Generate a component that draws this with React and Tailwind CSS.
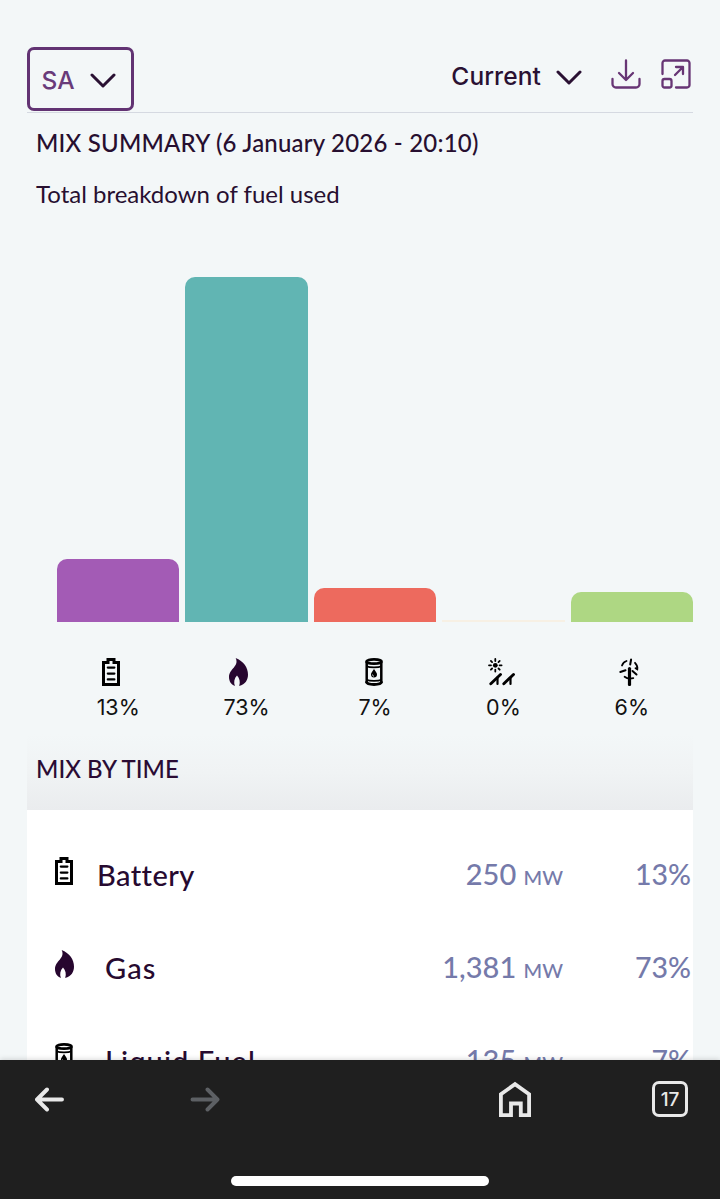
import React from 'react';

const BatteryIcon = ({ className = '' }) => (
  <svg width="18" height="28" viewBox="0 0 18 28" fill="none" stroke="#000" className={className}>
    <path d="M1.500 26.500V4.500H6V1.500h6v3h4.500v22z" strokeWidth="3" />
    <path d="M5.800 9.600h6.600M5.800 15.600h6.600M5.800 21.400h6.600" strokeWidth="2.200" strokeLinecap="round" />
  </svg>
);

const GasIcon = ({ className = '' }) => (
  <svg width="19" height="28" viewBox="0 0 19 28" fill="#27062f" className={className}>
    <path d="M6.600 0C14.500 3.200 19 9.500 19 16.600c0 5.400-2.600 9.900-8.800 11.400 1.300-4.200.4-7.600-2.200-10.500-2.800 3-3.500 6.700-2.100 10.400C1.900 26.600 0 22.800 0 19c0-4.300 2.400-6.800 4.900-9.600C7.300 6.700 8.500 3.700 6.600 0z" />
  </svg>
);

const FuelIcon = ({ className = '' }) => (
  <svg width="18" height="28" viewBox="0 0 18 28" fill="none" stroke="#000" className={className}>
    <ellipse cx="9" cy="3.500" rx="7.500" ry="2.100" strokeWidth="2.800" />
    <path d="M1.700 4v20.500M16.300 4v20.500" strokeWidth="2.500" />
    <path d="M1.500 8.200c3 1.500 12 1.500 15 0M1.500 21.800c3 1.500 12 1.500 15 0" strokeWidth="1.800" />
    <path d="M1.300 23.500c0 4 15.400 4 15.400 0" strokeWidth="2.800" />
    <path d="M9 11c1.800 2.600 3 3.900 3 5.600a3 3 0 0 1-6 0c0-1.700 1.200-3 3-5.600z" fill="#000" stroke="none" />
    <path d="M7.500 16.500c0 1 .5 1.600 1.400 1.800" stroke="#f3f7f8" strokeWidth=".8" />
  </svg>
);

const SolarIcon = ({ className = '' }) => (
  <svg width="28" height="28" viewBox="0 0 28 28" fill="none" stroke="#000" strokeLinecap="round" className={className}>
    <circle cx="7.300" cy="7.300" r="2.400" fill="#000" stroke="none" />
    <path d="M7.300 1v2M7.300 11.600v2M1 7.300h2M11.600 7.300h2M2.900 2.900l1.200 1.200M10.500 10.500l1.200 1.200M2.900 11.700l1.200-1.200M10.500 4.100l1.200-1.200" strokeWidth="1.800" />
    <path d="M2.800 25.800l9.700-9.300M15.800 25.800l9.700-9.300" strokeWidth="2.900" />
    <path d="M9.500 19.500v6.500M22.500 19.500v6.500" strokeWidth="2.200" />
  </svg>
);

const WindIcon = ({ className = '' }) => (
  <svg width="20" height="28" viewBox="0 0 20 28" fill="none" stroke="#000" strokeLinecap="round" className={className}>
    <path d="M10.500 10.500v16" strokeWidth="3.200" />
    <path d="M11.200 6.500l.9-5M6.500 12.300L1.300 14M13.500 13l4 3.500" strokeWidth="2" />
    <path d="M3 7.500C3.800 5.200 5.300 3.700 7.500 3M16 4.800c2 2 2.700 4.300 2.300 6.500l-1.800-1M5.600 18.800c2.600 2 6 2 8.700 1.300" strokeWidth="1.800" />
  </svg>
);

const Chevron = ({ className = '' }) => (
  <svg width="26" height="15" viewBox="0 0 26 15" fill="none" stroke="#2a1133" strokeWidth="3" strokeLinecap="round" strokeLinejoin="round" className={className}>
    <path d="M2 2l11 11L24 2" />
  </svg>
);

const fuels = [
  { label: '13%', height: 63, color: 'bg-[#a35bb5]', Icon: BatteryIcon, shift: 'mr-[15px]' },
  { label: '73%', height: 345, color: 'bg-[#61b5b3]', Icon: GasIcon, shift: 'mr-[16px]' },
  { label: '7%', height: 34, color: 'bg-[#ed6a5e]', Icon: FuelIcon, shift: 'mr-[3px]' },
  { label: '0%', height: 2, color: 'bg-[#f7f0e4]', Icon: SolarIcon, shift: 'mr-[3px]' },
  { label: '6%', height: 30, color: 'bg-[#aed783]', Icon: WindIcon, shift: 'mr-[5px]' },
];

const rows = [
  { name: 'Battery', mw: '250', share: '13%', Icon: BatteryIcon, indent: 'pl-6', tracking: 'tracking-[0.4px]' },
  { name: 'Gas', mw: '1,381', share: '73%', Icon: GasIcon, indent: 'pl-[31px]', tracking: 'tracking-[1.1px]' },
  { name: 'Liquid Fuel', mw: '135', share: '7%', Icon: FuelIcon, indent: 'pl-8', tracking: 'tracking-[1.1px]' },
];

const Header = () => (
  <header className="flex h-[66px] shrink-0 justify-between border-b-[1.5px] border-[#d5d9e1]">
    <button className="flex h-16 w-[107px] items-center gap-[15px] rounded-[7px] border-[3.5px] border-[#623373] pl-[11.5px]">
      <span className="mt-0.5 font-['Inter'] text-[24.5px] font-medium text-[#693b7a]">SA</span>
      <Chevron className="mt-[3px]" />
    </button>
    <div className="flex h-[58px] items-center">
      <span className="font-['Inter'] text-[24.5px] font-medium tracking-[0.1px] text-[#2a1133]">Current</span>
      <Chevron className="ml-[15px] mt-[3px]" />
      <svg width="30" height="30" viewBox="0 0 30 30" fill="none" stroke="#673574" strokeWidth="2.300" strokeLinecap="round" strokeLinejoin="round" className="ml-[29px] mt-[-5px]">
        <path d="M15 1.500v19M8 14l7 7 7-7M1.500 20v5a3.500 3.500 0 0 0 3.500 3.500h20a3.500 3.500 0 0 0 3.500-3.500v-5" />
      </svg>
      <svg width="30" height="30" viewBox="0 0 30 30" fill="none" stroke="#673574" strokeWidth="2.300" strokeLinecap="round" strokeLinejoin="round" className="ml-5 mr-[2px] mt-[-5px]">
        <path d="M1.500 15V4A2.500 2.500 0 0 1 4 1.500h22A2.500 2.500 0 0 1 28.500 4v22a2.500 2.500 0 0 1-2.500 2.500H15M14 16l8-8M15 8h7v7" />
        <rect x="1.500" y="20" width="9" height="8.500" rx="2" />
      </svg>
    </div>
  </header>
);

const MixChart = () => (
  <section>
    <div className="flex h-[388px] items-end gap-1.5 pl-[30px]">
      {fuels.map(({ label, height, color }) => (
        <div key={label} className={`flex-1 ${height > 9 ? 'rounded-t-[10px]' : ''} ${color}`} style={{ height }} />
      ))}
    </div>
    <div className="flex gap-1.5 pl-[30px] pt-9">
      {fuels.map(({ label, Icon, shift }) => (
        <div key={label} className="flex flex-1 flex-col items-center">
          <Icon className={shift} />
          <span className="mt-[5px] font-['Inter'] text-[21.5px] leading-8 text-[#111]">{label}</span>
        </div>
      ))}
    </div>
  </section>
);

const MixRow = ({ name, mw, share, Icon, indent, tracking }) => (
  <div className="flex h-[93px] items-center pl-7">
    <Icon className="mb-2 shrink-0" />
    <span className={`text-[29px] font-medium text-[#270a30] ${indent} ${tracking}`}>{name}</span>
    <span className="mb-px ml-auto text-[29px] font-medium text-[#757aaa]">
      {mw} <span className="text-[20px]">MW</span>
    </span>
    <span className="mb-px w-[130px] pr-0.5 text-right text-[28.5px] font-medium text-[#757aaa]">{share}</span>
  </div>
);

const BrowserBar = () => (
  <nav className="relative flex h-[139px] shrink-0 items-start bg-[#1f1f1f] pl-[35px] pr-8 pt-[21px] shadow-[0_-1px_5px_rgba(0,0,0,0.15)]">
    <svg width="30" height="36" viewBox="0 0 30 36" fill="none" stroke="#e8e8e8" strokeWidth="3.900" strokeLinecap="round" strokeLinejoin="round">
      <path d="M27 18.500H2.500M12 8.500l-10 10 10 10" />
    </svg>
    <svg width="30" height="36" viewBox="0 0 30 36" fill="none" stroke="#5d6064" strokeWidth="3.900" strokeLinecap="round" strokeLinejoin="round" className="ml-[125px]">
      <path d="M2.500 18.500h25M17.500 8.500l10 10-10 10" />
    </svg>
    <svg width="32" height="36" viewBox="0 0 32 36" fill="none" stroke="#e8e8e8" strokeWidth="3.800" className="ml-auto mr-[121px]">
      <path d="M1.900 34.100V13.200L16 3.200l14.100 10v20.900h-8.300V22.500H12v11.600z" />
    </svg>
    <span className="flex h-9 w-9 items-center justify-center rounded-[7px] border-[3.5px] border-[#e8e8e8] pt-0.5 font-['Inter'] text-[19px] font-medium tracking-[-0.2px] text-[#e8e8e8]">17</span>
    <div className="absolute bottom-[13px] left-[231px] h-2.5 w-[258px] rounded-full bg-white" />
  </nav>
);

export default function App() {
  return (
    <div className="flex h-[1199px] w-[720px] flex-col overflow-hidden bg-[#f3f7f8] font-['Lato',sans-serif]">
      <main className="flex min-h-0 flex-1 flex-col overflow-hidden px-[27px] pt-[47px]">
        <Header />
        <div className="h-[121px] shrink-0 pl-[9px] pt-[14px] text-[#270f30]">
          <h1 className="text-[24px] font-medium leading-8 tracking-[0.2px]">MIX SUMMARY (6 January 2026 - 20:10)</h1>
          <p className="mt-[19px] text-[24px] leading-8">Total breakdown of fuel used</p>
        </div>
        <MixChart />
        <h2 className="mt-[11px] h-[76px] shrink-0 bg-linear-to-b from-[#f3f7f8] via-[#f0f3f4] to-[#eaecee] pl-[9px] pt-[19px] text-[24px] font-medium leading-8 text-[#2b0c34]">MIX BY TIME</h2>
        <section className="shrink-0 bg-white pt-[18px]">
          {rows.map((row) => (
            <MixRow key={row.name} {...row} />
          ))}
        </section>
      </main>
      <BrowserBar />
    </div>
  );
}
